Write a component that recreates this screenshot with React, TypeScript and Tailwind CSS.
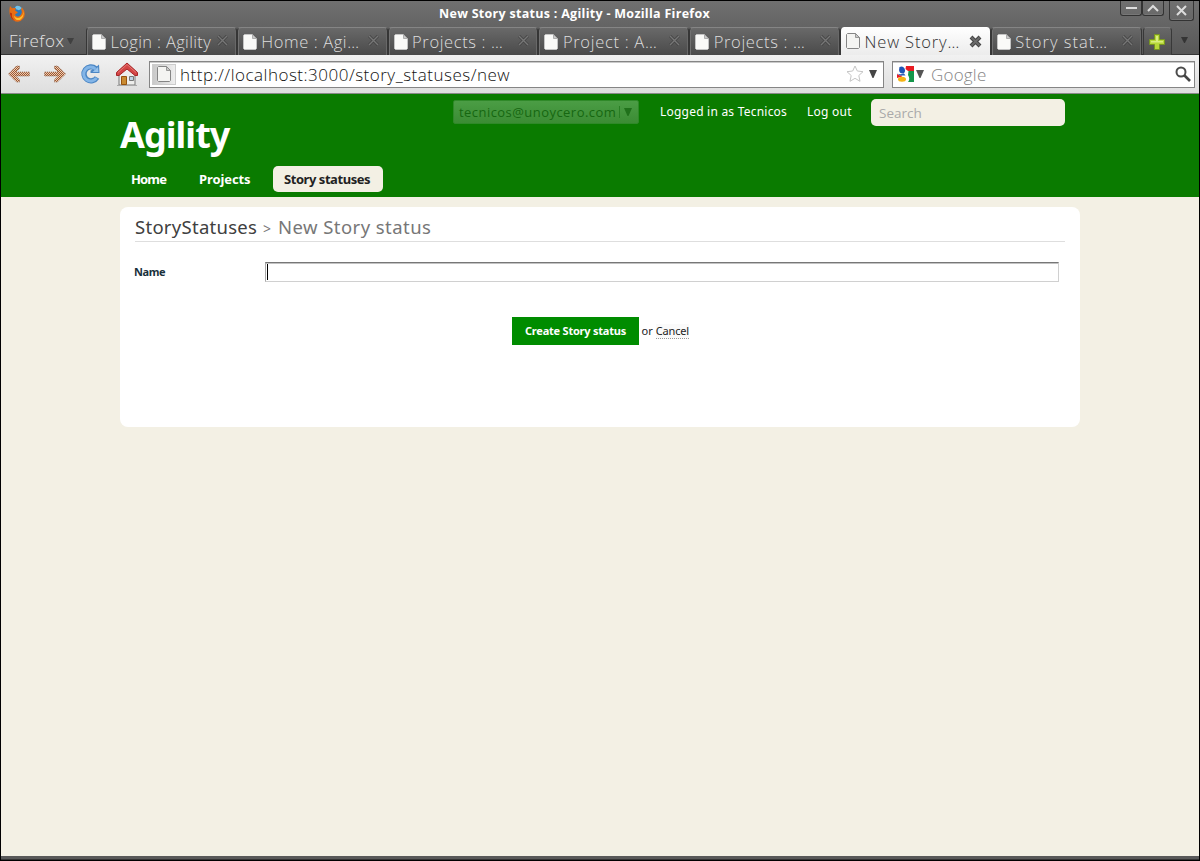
import React from "react";

function PageIcon({ active = false }: { active?: boolean }) {
  return (
    <svg width="14" height="16" viewBox="0 0 14 16" className="shrink-0">
      <path d="M.5 1.5 1.5.5h8l4 4v10l-1 1h-11l-1-1z" fill={active ? "#f4f4f2" : "#fafaf8"} stroke={active ? "#858585" : "#c4c4c4"} />
      <path d="M9.5.5v4h4z" fill="#c9c9c9" stroke={active ? "#858585" : "#a0a0a0"} strokeWidth=".8" />
    </svg>
  );
}

function CloseIcon({ active = false }: { active?: boolean }) {
  return active ? (
    <svg width="13" height="13" viewBox="0 0 13 13" className="shrink-0">
      <path d="m2 2 9 9M11 2l-9 9" stroke="#454545" strokeWidth="4" />
      <path d="m2.5 2.5 8 8m0-8-8 8" stroke="#6b6b6b" strokeWidth="1.8" />
    </svg>
  ) : (
    <svg width="11" height="11" viewBox="0 0 11 11" className="mb-[2px] shrink-0">
      <path d="m1 1 9 9m0-9-9 9" stroke="#444" strokeWidth="3" />
      <path d="m1 1 9 9m0-9-9 9" stroke="#777" strokeWidth="1.4" />
    </svg>
  );
}

function Triangle({ color, w = 8, h = 8 }: { color: string; w?: number; h?: number }) {
  return (
    <svg width={w} height={h} viewBox="0 0 8 8" preserveAspectRatio="none" className="shrink-0">
      <path d="M0 0h8L4.5 8h-1z" fill={color} />
    </svg>
  );
}

function FirefoxLogo() {
  return (
    <svg width="16" height="17" viewBox="0 0 16 16" preserveAspectRatio="none">
      <circle cx="8.5" cy="7.5" r="6.5" fill="#2d79b9" />
      <path d="M6 2Q9-1 13 3L10 5 7 4z" fill="#73c3e8" />
      <path d="M1 1 3 3q2-1 4 0L6 5l3 2-3 2q1 3 5 1 3-2 1-6L13 2q5 6 1 11-4 5-10 1-5-4-3-13z" fill="#e86d13" />
      <path d="M14 4q1 5-2 7-4 3-7-1 1 5 6 4 5-3 3-10z" fill="#ffc02a" />
      <path d="M1 7q0 6 5 8-4-3-3-7z" fill="#b82f0b" />
    </svg>
  );
}

function Arrow({ flip = false }: { flip?: boolean }) {
  return (
    <svg width="24" height="22" viewBox="0 0 24 22" className={flip ? "-scale-x-100" : ""}>
      <defs>
        <pattern id={flip ? "dotsR" : "dotsL"} width="2" height="2" patternUnits="userSpaceOnUse">
          <path d="M0 0h2v2H0z" fill="#efceb3" />
          <path d="M0 0h1v1H0zM1 1h1v1H1z" fill="#9c5631" />
        </pattern>
      </defs>
      <path d="m1.5 11 8-8h3v2.500L9 9h13.500v4H9l3.500 3.500V19h-3z" fill={flip ? "url(#dotsR)" : "url(#dotsL)"} stroke="#9c7661" strokeWidth="1" strokeDasharray="1 1" />
    </svg>
  );
}

function Reload() {
  return (
    <svg width="21" height="22" viewBox="0 0 21 22">
      <path d="M17 14.500a7 7 0 1 1-1.500-9" fill="none" stroke="#4b86c4" strokeWidth="5.300" />
      <path d="m19 1.500.5 8.500h-9V7.500l3-1z" fill="#4b86c4" />
      <path d="M16.500 15a7 7 0 1 1-1-9" fill="none" stroke="#83b5e7" strokeWidth="3" />
      <path d="m18 4 .5 5h-6z" fill="#96c2eb" />
    </svg>
  );
}

function House() {
  return (
    <svg width="24" height="25" viewBox="0 0 24 25">
      <path d="M4 12 12 5l8 7v11H4z" fill="#eeeeec" stroke="#797979" />
      <path d="M2 23.500h20" stroke="#aaa" />
      <path d="M6.500 14.500h5v8h-5z" fill="#c98b32" stroke="#96530e" />
      <path d="M14.500 14.500h4v4h-4z" fill="#bdd1e3" stroke="#777" />
      <path d="M1.500 13.500v-3L12 1l10.500 9.500v3H20L12 7l-8 6.500z" fill="#d34545" stroke="#a62426" />
      <path d="M3 10.500 12 2.500l9 8" fill="none" stroke="#e57773" />
    </svg>
  );
}

function GoogleIcon() {
  return (
    <svg width="17" height="16" viewBox="0 0 17 16">
      <path d="M0 0h17v16H0z" fill="#fff" />
      <path d="M9 0h8v5h-6L8.500 3z" fill="#e81c23" />
      <path d="M11.500 5H17v11h-6q2.500-3 0-7z" fill="#15964b" />
      <path d="M0 8q2 1.500 5 1.500v1L0 12z" fill="#e81c23" />
      <path d="M2.500 1Q6-.5 7.500 2.500q1.500 3.500-1 5Q2.500 8 2 4z" fill="#1f55b5" />
      <path d="M0 7.500q3 1.500 7 0l1.500 2H3z" fill="#2860b9" />
      <ellipse cx="5" cy="13.300" rx="4" ry="2.500" fill="#f6b414" />
    </svg>
  );
}

const tabs = [
  { label: "Login : Agility", spacing: "tracking-[0.34px]" },
  { label: "Home : Agi…", spacing: "tracking-[0.6px]" },
  { label: "Projects : …", spacing: "tracking-[0.62px]" },
  { label: "Project : A…", spacing: "tracking-[0.7px]" },
  { label: "Projects : …", spacing: "tracking-[0.65px]" },
  { label: "New Story…", spacing: "tracking-[0.85px]", active: true },
  { label: "Story stat…", spacing: "tracking-[1px]" },
];

function Tab({ label, spacing, active = false }: { label: string; spacing: string; active?: boolean }) {
  return (
    <div
      className={`flex h-[28px] w-[150.8px] shrink-0 items-center rounded-t-[4px] border-x pr-[8px] pl-[5px] ${
        active
          ? "border-[#383838] bg-linear-to-b from-white to-[#ececec] text-[#303030]"
          : "border-[#363636] border-t border-t-[#858585] bg-linear-to-b from-[#696969] to-[#4a4a4a] text-[#dedede] shadow-[inset_1px_0_#727272,inset_-1px_0_#686868]"
      }`}
    >
      <PageIcon active={active} />
      <span className={`mt-px ml-[4.500px] flex-1 whitespace-nowrap text-[16.500px] leading-[28px] font-light ${spacing}`}>{label}</span>
      <CloseIcon active={active} />
    </div>
  );
}

function BrowserChrome() {
  return (
    <div className="h-[94px] shrink-0 border-t border-black bg-linear-to-b from-[#707070] to-[#454545] font-['Open_Sans',sans-serif]">
      <div className="flex h-[26px] items-start pl-2">
        <div className="w-[430px] pt-[4px]"><FirefoxLogo /></div>
        <h1 className="mt-[3px] flex-1 whitespace-nowrap text-[12.500px] leading-5 font-bold tracking-[0.29px] text-white">New Story status : Agility - Mozilla Firefox</h1>
        <div className="flex h-[20px] items-start">
          <div className="flex h-[15px] w-[22px] items-center justify-center rounded-b-[3px] border border-t-0 border-[#333] shadow-[inset_0_-1px_#777]"><svg width="11" height="10"><path d="M0 5h11" stroke="#ddd" strokeWidth="2" /></svg></div>
          <div className="flex h-[15px] w-[22px] items-center justify-center rounded-b-[3px] border border-t-0 border-[#333] shadow-[inset_0_-1px_#777]"><svg width="12" height="10"><path d="m1 8 5-5 5 5" fill="none" stroke="#ddd" strokeWidth="2" /></svg></div>
          <div className="mr-[5px] ml-[5px] flex h-[20px] w-[25px] items-center justify-center rounded-b-[3px] border border-t-0 border-[#333] shadow-[inset_0_-1px_#777]"><svg width="11" height="11"><path d="m1 1 9 9m0-9-9 9" stroke="#ddd" strokeWidth="2" /></svg></div>
        </div>
      </div>
      <div className="flex h-[28px] border-b border-[#353535]">
        <div className="flex w-[85px] items-center pl-2 text-[17px] font-light text-[#e4e4e4]"><span className="w-[58px] tracking-[0.5px]">Firefox</span><Triangle color="#404040" w={7} h={6} /></div>
        {tabs.map((tab, i) => <Tab key={i} {...tab} />)}
        <div className="ml-px flex h-[28px] w-[29px] items-center justify-center rounded-t-[4px] border border-b-0 border-[#383838] border-t-[#7b7b7b] bg-linear-to-b from-[#686868] to-[#4d4d4d]">
          <svg width="16" height="16"><path d="M5.500.5h5v5h5v5h-5v5h-5v-5h-5v-5h5z" fill="#b6d739" stroke="#779522" /><path d="M7 2h2v5h5v1.500H2V7h5z" fill="#d9ed80" /></svg>
        </div>
        <div className="ml-[9px] flex items-center pb-[2px]"><Triangle color="#343434" w={7} h={6} /></div>
      </div>
      <div className="flex h-[39px] items-center border-b border-[#898989] bg-linear-to-b from-[#f1f1f1] to-[#dedede] pr-[4px] pl-[6px]">
        <div className="w-[36px]"><Arrow /></div>
        <div className="w-[37px]"><Arrow flip /></div>
        <div className="w-[35px]"><Reload /></div>
        <div className="w-[34px]"><House /></div>
        <div className="flex h-[27px] w-[735px] shrink-0 items-center border border-[#858585] bg-white pr-[6px] pl-[2px] shadow-[inset_0_1px_#cacaca]">
          <div className="flex h-[21px] w-[24px] items-center justify-center border border-[#ccc] bg-linear-to-r from-[#c9c9c9] to-[#eee]"><PageIcon active /></div>
          <span className="mt-px ml-[4px] flex-1 text-[17px] leading-6 font-light tracking-[0.5px] text-[#111]">http://localhost:3000/story_statuses/new</span>
          <svg width="18" height="18" viewBox="0 0 18 18" className="mr-[5px]"><path d="m9 1 2.300 5 5.700.7-4.200 3.800 1.200 5.800-5-3-5 3 1.200-5.800L1 6.700 6.700 6z" fill="#fff" stroke="#c5c5c5" /></svg>
          <Triangle color="#454545" />
        </div>
        <div className="ml-[8px] flex h-[27px] w-[303px] shrink-0 items-center border border-[#858585] bg-white pr-[3px] pl-[4px] shadow-[inset_0_1px_#cacaca]">
          <GoogleIcon />
          <div className="mr-[7px] ml-[2px]"><Triangle color="#555" /></div>
          <span className="mt-px flex-1 text-[17px] font-light tracking-[0.2px] text-[#858585]">Google</span>
          <svg width="16" height="16"><circle cx="6" cy="6" r="4.500" fill="#fff" stroke="#4c4c4c" strokeWidth="2" /><path d="m9 9 6 6" stroke="#444" strokeWidth="2.600" /></svg>
        </div>
      </div>
    </div>
  );
}

export default function App() {
  return (
    <div className="flex h-[861px] w-[1200px] flex-col overflow-hidden border-x border-black bg-[#f3f0e4] font-['Noto_Sans',sans-serif]">
      <BrowserChrome />
      <header className="h-[103px] shrink-0 bg-[#0a7b00] px-[119px] text-white">
        <div className="flex h-[68px] items-start">
          <div className="w-[333px] pt-[16px] text-[36px] leading-[50px] font-bold tracking-[-0.95px]">Agility</div>
          <div className="mt-[6px] flex h-[24px] w-[186px] items-center rounded-[2px] border border-[#2f8929] bg-linear-to-b from-[#4b9d45] to-[#3b8c34] pr-[6px] pl-[5px] font-['Open_Sans',sans-serif] text-[13px] text-[#166711]">
            <span className="mt-px tracking-[0.45px]">tecnicos@unoycero.com</span>
            <div className="ml-auto flex h-[12px] items-center border-l border-[#297f24] pl-1"><Triangle color="#20711b" /></div>
          </div>
          <span className="mt-[9px] ml-[21px] w-[147px] whitespace-nowrap text-[12px] leading-[18px] tracking-[0.22px]">Logged in as Tecnicos</span>
          <span className="mt-[9px] w-[64px] whitespace-nowrap text-[12px] leading-[18px] tracking-[0.25px]">Log out</span>
          <div className="mt-[5px] flex h-[27px] w-[194px] items-center rounded-[5px] bg-[#f3f0e4] px-[8px] pt-[2px] font-['Open_Sans',sans-serif] text-[13.500px] text-[#aaa]">Search</div>
        </div>
        <nav className="flex h-[35px] items-start pt-[4px] text-[13px] leading-[26px] font-bold">
          <a className="ml-[11px] w-[68px] tracking-[-0.85px]">Home</a>
          <a className="w-[74px] tracking-[-0.1px]">Projects</a>
          <a className="h-[26px] w-[110px] whitespace-nowrap rounded-[5px] bg-[#f3f0e4] pl-[11px] tracking-[-0.45px] text-[#222]">Story statuses</a>
        </nav>
      </header>
      <main className="flex-1 px-[119px] pt-[10px]">
        <section className="h-[220px] rounded-[8px] bg-white px-[15px] pt-[7px]">
          <h2 className="h-[28px] border-b border-[#dedede] text-[18.500px] leading-[25px] whitespace-nowrap"><span className="inline-block w-[128px] tracking-[0.28px] text-[#404040]">StoryStatuses</span><span className="inline-block w-[15px] text-[14px] text-[#777]">&gt;</span><span className="tracking-[0.44px] text-[#777]">New Story status</span></h2>
          <div className="mt-[20px] flex h-[20px] items-center">
            <label className="-ml-px w-[131px] text-[11px] leading-5 font-bold tracking-[-0.4px] text-[#19303b]">Name</label>
            <div className="flex h-[20px] w-[794px] items-center border border-[#d0d0d0] border-t-[#777] border-l-[#aaa] bg-white shadow-[inset_0_1px_#c2c2c2]"><span className="ml-[1px] h-[16px] w-px bg-black" /></div>
          </div>
          <div className="mt-[35px] ml-[377px] flex items-center text-[11px]">
            <button className="h-[28px] w-[127px] whitespace-nowrap bg-[#008c00] text-[11px] font-bold tracking-[-0.22px] text-white">Create Story status</button>
            <span className="ml-[2.500px] text-[#222]">or</span>
            <a className="ml-[3px] h-[15px] whitespace-nowrap border-b border-dotted border-[#999] bg-[#fafafa] leading-[14px] tracking-[-0.15px] text-[#222]">Cancel</a>
          </div>
        </section>
      </main>
      <footer className="h-[5px] shrink-0 border-b border-black bg-[#595959] shadow-[inset_0_-1px_#333]" />
    </div>
  );
}
